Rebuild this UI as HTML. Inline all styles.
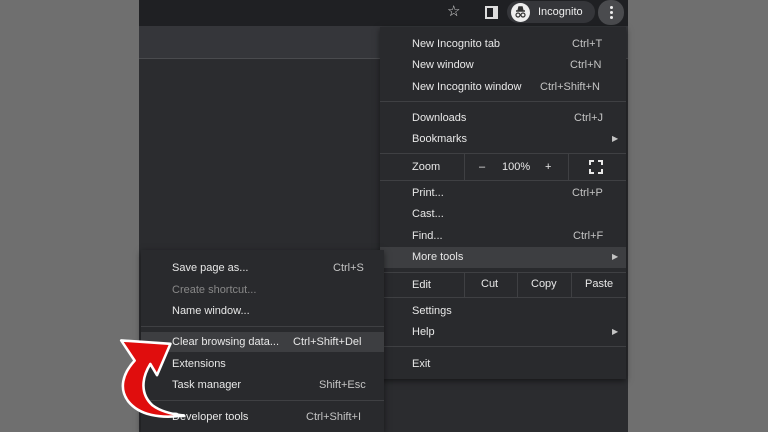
<!DOCTYPE html>
<html><head><style>
*{margin:0;padding:0;box-sizing:border-box}
body{width:768px;height:432px;overflow:hidden;background:#6f6f6f;font-family:"Liberation Sans",sans-serif;font-size:11px;color:#e8e8e8;position:relative}
.a{position:absolute}
.t{position:absolute;white-space:nowrap;line-height:14px}
.s{color:#c4c4c4}
.sep{position:absolute;height:1px;background:#3f4043}
</style></head><body>
<div class="a" style="left:139px;top:0;width:489px;height:432px;background:#2b2c2f"></div>
<div class="a" style="left:139px;top:0;width:489px;height:26px;background:#1f2023"></div>
<div class="a" style="left:139px;top:26px;width:489px;height:32px;background:#35363a"></div>
<div class="a" style="left:139px;top:58px;width:489px;height:1px;background:#4a4b4e"></div>
<!-- top bar icons -->
<div class="t" style="left:447px;top:5px;font-size:15px;color:#ddd">☆</div>
<div class="a" style="left:485px;top:6px;width:13px;height:13px;border:2px solid #ddd;border-right-width:5px"></div>
<div class="a" style="left:507px;top:1px;width:88px;height:22px;border-radius:11px;background:#35363a"></div>
<div class="a" style="left:511px;top:3px;width:19px;height:19px;border-radius:50%;background:#eee"></div>
<svg class="a" style="left:511px;top:3px" width="19" height="19"><path d="M5 8h9M7 8l1-4h3l1 4" stroke="#333" stroke-width="1.5" fill="#333"/><circle cx="7" cy="12" r="2" fill="none" stroke="#333" stroke-width="1.2"/><circle cx="12" cy="12" r="2" fill="none" stroke="#333" stroke-width="1.2"/></svg>
<div class="t" style="left:538px;top:5px;color:#eee">Incognito</div>
<div class="a" style="left:598px;top:0;width:26px;height:25px;border-radius:12px;background:#4a4b4e"></div>
<div class="a" style="left:610px;top:6px;width:3px;height:3px;border-radius:50%;background:#eee;box-shadow:0 5px 0 #eee,0 10px 0 #eee"></div>

<!-- main menu -->
<div class="a" style="left:380px;top:27px;width:246px;height:352px;background:#292a2d;box-shadow:0 2px 6px rgba(0,0,0,.5)"></div>
<div class="a" style="left:380px;top:247px;width:246px;height:21px;background:#3d3e41"></div>
<div class="sep" style="left:380px;top:101px;width:246px"></div>
<div class="sep" style="left:380px;top:153px;width:246px"></div>
<div class="sep" style="left:380px;top:180px;width:246px"></div>
<div class="sep" style="left:380px;top:272px;width:246px"></div>
<div class="sep" style="left:380px;top:297px;width:246px"></div>
<div class="sep" style="left:380px;top:346px;width:246px"></div>
<div class="a" style="left:464px;top:154px;width:1px;height:26px;background:#3f4043"></div>
<div class="a" style="left:568px;top:154px;width:1px;height:26px;background:#3f4043"></div>
<div class="a" style="left:464px;top:273px;width:1px;height:24px;background:#3f4043"></div>
<div class="a" style="left:517px;top:273px;width:1px;height:24px;background:#3f4043"></div>
<div class="a" style="left:571px;top:273px;width:1px;height:24px;background:#3f4043"></div>

<div class="t" style="left:412px;top:37px">New Incognito tab</div><div class="t s" style="left:572px;top:37px">Ctrl+T</div>
<div class="t" style="left:412px;top:58px">New window</div><div class="t s" style="left:570px;top:58px">Ctrl+N</div>
<div class="t" style="left:412px;top:80px">New Incognito window</div><div class="t s" style="left:540px;top:80px">Ctrl+Shift+N</div>
<div class="t" style="left:412px;top:111px">Downloads</div><div class="t s" style="left:574px;top:111px">Ctrl+J</div>
<div class="t" style="left:412px;top:132px">Bookmarks</div><div class="t s" style="left:612px;top:132px;font-size:8px">▶</div>
<div class="t" style="left:412px;top:160px">Zoom</div>
<div class="t" style="left:479px;top:160px">–</div>
<div class="t" style="left:502px;top:160px">100%</div>
<div class="t" style="left:545px;top:160px">+</div>
<svg class="a" style="left:589px;top:160px" width="14" height="14"><path d="M1 5V1h4M9 1h4v4M13 9v4H9M5 13H1V9" stroke="#e8e8e8" stroke-width="2" fill="none"/></svg>
<div class="t" style="left:412px;top:186px">Print...</div><div class="t s" style="left:572px;top:186px">Ctrl+P</div>
<div class="t" style="left:412px;top:207px">Cast...</div>
<div class="t" style="left:412px;top:229px">Find...</div><div class="t s" style="left:573px;top:229px">Ctrl+F</div>
<div class="t" style="left:412px;top:250px">More tools</div><div class="t s" style="left:612px;top:250px;font-size:8px">▶</div>
<div class="t" style="left:412px;top:278px">Edit</div>
<div class="t" style="left:481px;top:277px">Cut</div>
<div class="t" style="left:531px;top:277px">Copy</div>
<div class="t" style="left:585px;top:277px">Paste</div>
<div class="t" style="left:412px;top:304px">Settings</div>
<div class="t" style="left:412px;top:325px">Help</div><div class="t s" style="left:612px;top:325px;font-size:8px">▶</div>
<div class="t" style="left:412px;top:357px">Exit</div>

<!-- submenu -->
<div class="a" style="left:141px;top:250px;width:243px;height:182px;background:#292a2d;box-shadow:0 2px 6px rgba(0,0,0,.5)"></div>
<div class="a" style="left:141px;top:332px;width:243px;height:20px;background:#3d3e41"></div>
<div class="sep" style="left:141px;top:326px;width:243px"></div>
<div class="sep" style="left:141px;top:400px;width:243px"></div>
<div class="t" style="left:172px;top:261px">Save page as...</div><div class="t s" style="left:333px;top:261px">Ctrl+S</div>
<div class="t" style="left:172px;top:283px;color:#888">Create shortcut...</div>
<div class="t" style="left:172px;top:304px">Name window...</div>
<div class="t" style="left:172px;top:335px">Clear browsing data...</div><div class="t" style="left:293px;top:335px">Ctrl+Shift+Del</div>
<div class="t" style="left:172px;top:357px">Extensions</div>
<div class="t" style="left:172px;top:378px">Task manager</div><div class="t s" style="left:319px;top:378px">Shift+Esc</div>
<div class="t" style="left:172px;top:410px">Developer tools</div><div class="t s" style="left:306px;top:410px">Ctrl+Shift+I</div>

<!-- arrow -->
<svg class="a" style="left:108px;top:325px" width="90" height="105">
<g transform="translate(2,2) scale(1.12)">
<path d="M10 12 L54 15 L42 43 L36 33 C28 46 27 60 38 70 C46 76 56 78 66 79 C45 82 26 79 16 66 C8 55 11 42 22 30 Z" fill="#e00d0d" stroke="#fff" stroke-width="2.3" stroke-linejoin="round"/>
</g>
</svg>
</body></html>
